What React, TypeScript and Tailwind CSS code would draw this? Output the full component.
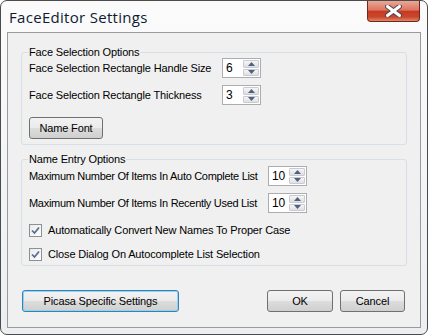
import React from 'react';

const cn = (...c: (string | false | undefined)[]) => c.filter(Boolean).join(' ');

function SpinArrow({ up }: { up?: boolean }) {
  return (
    <div className="flex h-[8px] w-full items-center justify-center rounded-[1px] border border-[#c9cbd0] bg-[linear-gradient(#f6f6f6,#dedfe2)]">
      <svg width="7" height="4" viewBox="0 0 7 4">
        {up ? <path d="M0 4 L3.5 0 L7 4 Z" fill="#4d6185" /> : <path d="M0 0 L3.5 4 L7 0 Z" fill="#4d6185" />}
      </svg>
    </div>
  );
}

function Spin({ value }: { value: string }) {
  return (
    <div className="flex h-[20px] w-[39px] border border-[#abadb3] bg-white">
      <span className="flex-1 pl-[3px] text-[12px] leading-[18px]">{value}</span>
      <div className="flex w-[17px] flex-col gap-px py-px pr-px">
        <SpinArrow up />
        <SpinArrow />
      </div>
    </div>
  );
}

function Check({ label }: { label: string }) {
  return (
    <div className="flex h-[13px] items-center gap-[6px]">
      <div className="flex h-[13px] w-[13px] items-center justify-center border border-[#8e8f8f] bg-[linear-gradient(135deg,#e9eaec,#ffffff)]">
        <svg width="9" height="9" viewBox="0 0 9 9">
          <path d="M1 4.5 L3.5 7 L8 1.5" fill="none" stroke="#56698f" strokeWidth="1.7" />
        </svg>
      </div>
      <span>{label}</span>
    </div>
  );
}

function Btn({ children, className }: { children: React.ReactNode; className?: string }) {
  return (
    <button
      className={cn(
        'h-[22px] rounded-[3px] border bg-[linear-gradient(#f2f2f2_0%,#ebebeb_50%,#dddddd_50%,#cfcfcf_100%)] text-center text-[11px] leading-[20px]',
        className
      )}
    >
      {children}
    </button>
  );
}

function Group({ title, className, children }: { title: string; className?: string; children: React.ReactNode }) {
  return (
    <div className={cn('relative mx-[13px] rounded-[3px] border border-[#d5dfe5] pl-[7px]', className)}>
      <span className="absolute -top-[8px] left-[6px] bg-[#f0f0f0] px-px leading-[14px]">{title}</span>
      {children}
    </div>
  );
}

export default function App() {
  return (
    <div className="flex h-[335px] w-[428px] flex-col overflow-hidden rounded-[7px] border border-[#4b4b4b] bg-[linear-gradient(#fbfbfc,#eceef1)]">
      <div className="flex h-[31px] shrink-0">
        <span className="pl-[8px] pt-[6px] font-['Open_Sans','Noto_Sans',sans-serif] text-[15px] leading-[20px] tracking-[0.3px] text-[#0d1b30]">
          FaceEditor Settings
        </span>
        <div className="ml-auto mr-[7px] flex h-[21px] w-[53px] items-center justify-center rounded-b-[4px] border border-t-0 border-[#6b2a1c] bg-[linear-gradient(#e9a898_0%,#dc7560_45%,#c63a21_52%,#c9472d_80%,#e2866a_100%)]">
          <svg width="17" height="12" viewBox="0 0 17 12">
            <path d="M2.5 1.5 L14.5 10.5 M14.5 1.5 L2.5 10.5" stroke="#4a4a4a" strokeWidth="5" strokeLinecap="round" />
            <path d="M2.5 1.5 L14.5 10.5 M14.5 1.5 L2.5 10.5" stroke="#ffffff" strokeWidth="3" strokeLinecap="round" />
          </svg>
        </div>
      </div>

      <div className="mx-[6px] flex h-[296px] shrink-0 flex-col border border-[#9a9a9a] bg-[#f0f0f0] font-['Liberation_Sans',Arial,sans-serif] text-[11px] tracking-[-0.15px] text-black">
        <Group title="Face Selection Options" className="mt-[19px] h-[93px] pt-[5px]">
          <div className="flex h-[20px] items-center">
            <span className="w-[193px]">Face Selection Rectangle Handle Size</span>
            <Spin value="6" />
          </div>
          <div className="mt-[7px] flex h-[20px] items-center">
            <span className="w-[193px]">Face Selection Rectangle Thickness</span>
            <Spin value="3" />
          </div>
          <Btn className="mt-[12px] w-[74px] border-[#707070]">Name Font</Btn>
        </Group>

        <Group title="Name Entry Options" className="mt-[14px] h-[107px] pt-[6px]">
          <div className="flex h-[20px] items-center">
            <span className="w-[239px] tracking-[-0.3px]">Maximum Number Of Items In Auto Complete List</span>
            <Spin value="10" />
          </div>
          <div className="mt-[7px] flex h-[20px] items-center">
            <span className="w-[239px] tracking-[-0.3px]">Maximum Number Of Items In Recently Used List</span>
            <Spin value="10" />
          </div>
          <div className="mt-[11px] flex flex-col gap-[11px]">
            <Check label="Automatically Convert New Names To Proper Case" />
            <Check label="Close Dialog On Autocomplete List Selection" />
          </div>
        </Group>

        <div className="mt-[24px] flex pl-[14px] pr-[15px]">
          <Btn className="w-[157px] border-[#3c7fb1] shadow-[inset_0_0_0_1px_#8fd3f5]">Picasa Specific Settings</Btn>
          <div className="ml-auto flex gap-[7px]">
            <Btn className="w-[66px] border-[#707070]">OK</Btn>
            <Btn className="w-[65px] border-[#707070]">Cancel</Btn>
          </div>
        </div>
      </div>
    </div>
  );
}
